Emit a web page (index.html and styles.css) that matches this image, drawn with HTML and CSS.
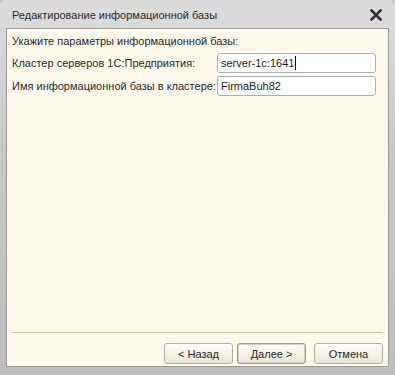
FILE: index.html
```html
<!DOCTYPE html>
<html lang="ru">
<head>
<meta charset="utf-8">
<link rel="stylesheet" href="styles.css">
</head>
<body>
<div class="window">
  <div class="titlebar">
    <span class="title">Редактирование информационной базы</span>
    <svg class="close" width="12" height="12" viewBox="0 0 12 12"><path d="M1.5 1.5 L10.5 10.5 M10.5 1.5 L1.5 10.5" stroke="#2e3034" stroke-width="2.6" stroke-linecap="square"/></svg>
  </div>
  <div class="content">
    <div class="heading">Укажите параметры информационной базы:</div>
    <div class="form">
      <label class="label">Кластер серверов 1С:Предприятия:</label>
      <div class="input">server-1c:1641<span class="caret"></span></div>
      <label class="label">Имя информационной базы в кластере:</label>
      <div class="input">FirmaBuh82</div>
    </div>
    <div class="spacer"></div>
    <div class="separator"></div>
    <div class="buttons">
      <button class="btn">&lt; Назад</button>
      <button class="btn focus">Далее &gt;</button>
      <button class="btn cancel">Отмена</button>
    </div>
  </div>
</div>
</body>
</html>
```
FILE: styles.css
```css
html, body {
  margin: 0;
  padding: 0;
  background: #c4c4c4;
}
.window {
  width: 395px;
  height: 375px;
  box-sizing: border-box;
  display: flex;
  flex-direction: column;
  padding: 0 6px 8px 6px;
  background: linear-gradient(#dcdcdc, #c9c9c9 40%, #bdbdbd);
  font-family: "Liberation Sans", Arial, sans-serif;
  font-size: 11px;
  color: #2a2a2a;
  border-radius: 6px 6px 0 0;
}
.titlebar {
  height: 28px;
  display: flex;
  align-items: center;
  justify-content: space-between;
  padding: 0 7px 0 6px;
  flex: none;
}
.title {
  font-size: 11px;
  color: #2c2c2c;
  padding-top: 1px;
}
.close {
  display: block;
  margin-top: 1px;
}
.content {
  flex: 1;
  display: flex;
  flex-direction: column;
  background: #fdfaec;
  border: 1px solid #9b9b9b;
  padding: 4px 5px 1px 5px;
}
.heading {
  height: 17px;
  line-height: 17px;
  font-size: 11px;
}
.form {
  display: grid;
  grid-template-columns: 205px 159px;
  row-gap: 3px;
  margin-top: 3px;
  align-items: center;
}
.label {
  font-size: 11px;
  white-space: nowrap;
}
.input {
  height: 18px;
  line-height: 18px;
  border: 1px solid #a9b0b9;
  border-radius: 3px;
  background: #ffffff;
  padding: 0 3px;
  font-size: 11px;
  color: #1e1e1e;
  display: flex;
  align-items: center;
}
.caret {
  display: inline-block;
  width: 1px;
  height: 14px;
  background: #000;
  margin-left: 1px;
}
.spacer {
  flex: 1;
}
.separator {
  height: 1px;
  background: #c9c3a3;
  border-bottom: 1px solid #fffef7;
  margin: 0 0 9px 0;
}
.buttons {
  display: flex;
  justify-content: flex-end;
  gap: 4px;
  padding-bottom: 1px;
}
.btn {
  width: 69px;
  height: 21px;
  box-sizing: border-box;
  border: 1px solid #b3b0a0;
  border-radius: 3px;
  background: linear-gradient(#ffffff, #f4f2e8 50%, #e9e6d8);
  font-family: "Liberation Sans", Arial, sans-serif;
  font-size: 11px;
  color: #2a2a2a;
  padding: 0;
}
.btn.focus {
  border: 1px solid #9e9b86;
  box-shadow: inset 0 0 0 1px #d4d0bc;
}
.btn.cancel {
  margin-left: 4px;
}
```
